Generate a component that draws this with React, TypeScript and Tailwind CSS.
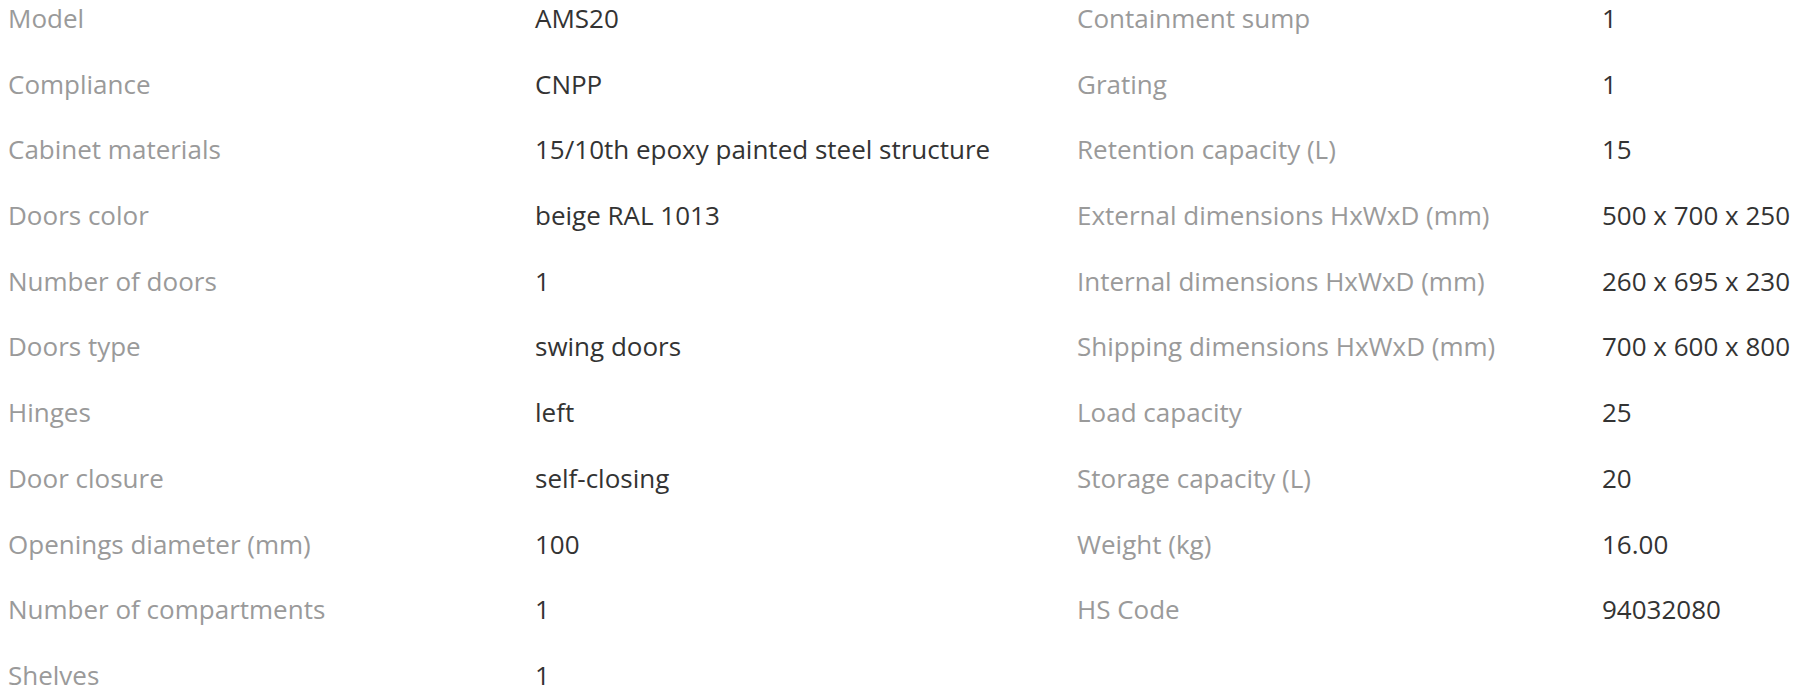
import React from "react";

const left: [string, string][] = [
  ["Model", "AMS20"],
  ["Compliance", "CNPP"],
  ["Cabinet materials", "15/10th epoxy painted steel structure"],
  ["Doors color", "beige RAL 1013"],
  ["Number of doors", "1"],
  ["Doors type", "swing doors"],
  ["Hinges", "left"],
  ["Door closure", "self-closing"],
  ["Openings diameter (mm)", "100"],
  ["Number of compartments", "1"],
  ["Shelves", "1"],
];

const right: [string, string][] = [
  ["Containment sump", "1"],
  ["Grating", "1"],
  ["Retention capacity (L)", "15"],
  ["External dimensions HxWxD (mm)", "500 x 700 x 250"],
  ["Internal dimensions HxWxD (mm)", "260 x 695 x 230"],
  ["Shipping dimensions HxWxD (mm)", "700 x 600 x 800"],
  ["Load capacity", "25"],
  ["Storage capacity (L)", "20"],
  ["Weight (kg)", "16.00"],
  ["HS Code", "94032080"],
];

function SpecColumn({ rows, labelWidth, className = "" }: { rows: [string, string][]; labelWidth: string; className?: string }) {
  return (
    <dl className={"flex flex-col " + className}>
      {rows.map(([label, value]) => (
        <div key={label} className="flex h-[65.7px] shrink-0">
          <dt className={"font-normal text-[#9a9a9a] " + labelWidth}>{label}</dt>
          <dd className="font-medium text-[#333333] whitespace-nowrap">{value}</dd>
        </div>
      ))}
    </dl>
  );
}

export default function App() {
  return (
    <div className="h-[698px] overflow-hidden bg-white pl-2 text-[26px] leading-[36px] [font-family:'Open_Sans',sans-serif]">
      <div className="flex">
        <SpecColumn rows={left} labelWidth="w-[527px]" className="w-[1069px] shrink-0" />
        <SpecColumn rows={right} labelWidth="w-[525px]" />
      </div>
    </div>
  );
}
